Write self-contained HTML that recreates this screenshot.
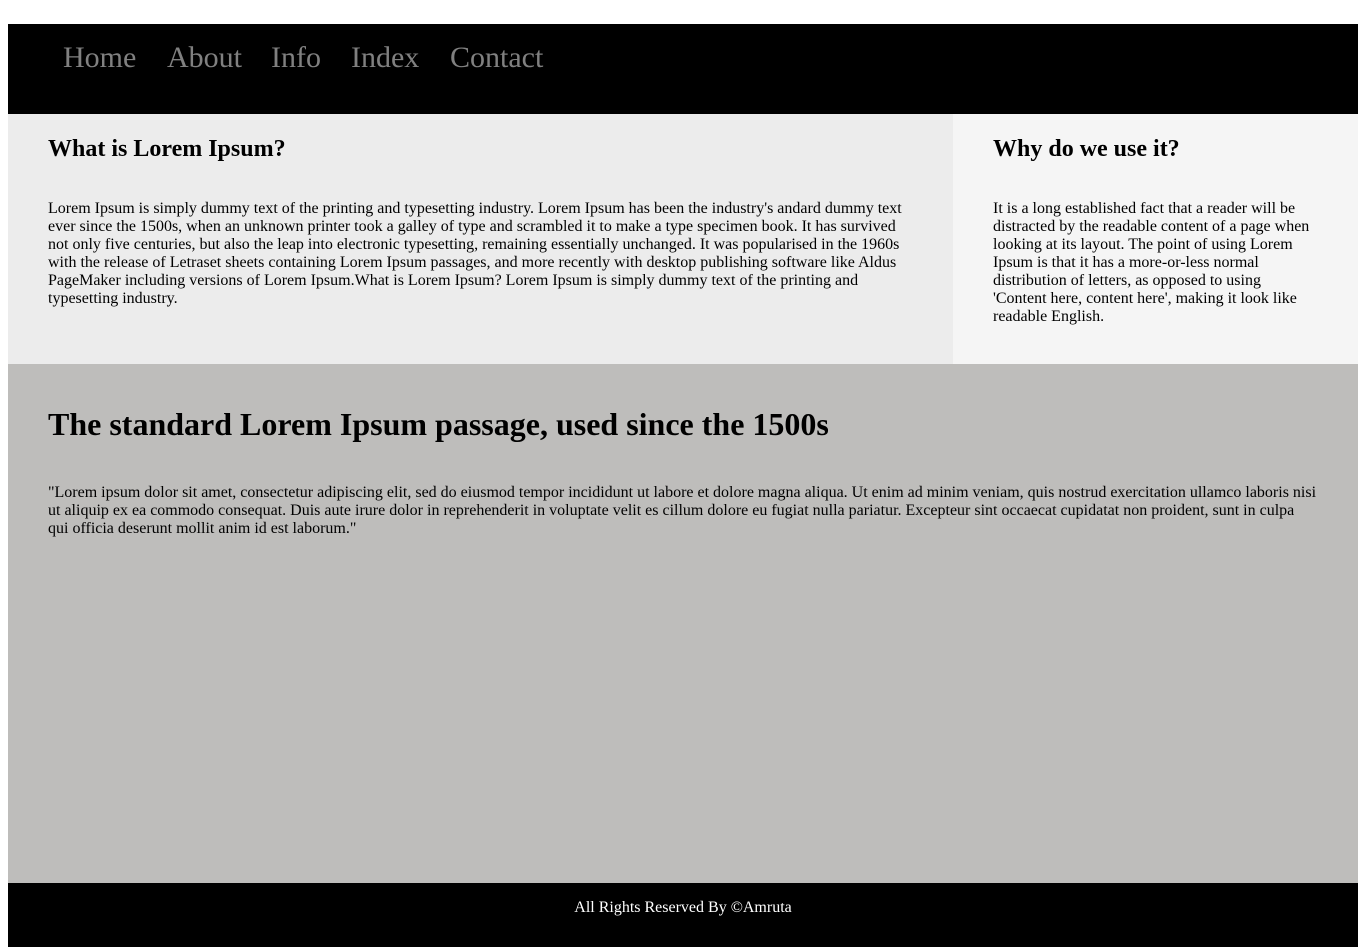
<!DOCTYPE html>
<html><head><style>
body{margin:0;background:#fff;font-family:"Liberation Serif",serif;}
.wrap{position:absolute;left:8px;top:24px;width:1350px;}
.hdr{background:#000;height:90px;position:relative;}
.hdr a{position:absolute;top:17px;font-size:30px;color:#808080;text-decoration:none;}
.row{display:flex;height:250px;}
.l{width:865px;background:#ececec;padding:0 40px;}
.r{width:325px;background:#f5f5f5;padding:0 40px;flex:1;}
h2{font-size:24px;margin:21px 0 0;line-height:28px;}
p{font-size:16px;line-height:18px;margin:0;}
.row p{margin-top:37px;}
.g{background:#bebdbb;height:519px;padding:0 40px;}
h1{font-size:32px;margin:0;padding-top:42px;line-height:37px;}
.g p{margin-top:41px;}
.f{background:#000;height:64px;color:#fff;text-align:center;font-size:16px;line-height:18px;padding-top:16px;box-sizing:border-box;}
</style></head><body><div class="wrap">
<div class="hdr"><a style="left:55px">Home</a><a style="left:159px">About</a><a style="left:263px">Info</a><a style="left:343px">Index</a><a style="left:442px">Contact</a></div>
<div class="row"><div class="l"><h2>What is Lorem Ipsum?</h2><p>Lorem Ipsum is simply dummy text of the printing and typesetting industry. Lorem Ipsum has been the industry's andard dummy text ever since the 1500s, when an unknown printer took a galley of type and scrambled it to make a type specimen book. It has survived not only five centuries, but also the leap into electronic typesetting, remaining essentially unchanged. It was popularised in the 1960s with the release of Letraset sheets containing Lorem Ipsum passages, and more recently with desktop publishing software like Aldus PageMaker including versions of Lorem Ipsum.What is Lorem Ipsum? Lorem Ipsum is simply dummy text of the printing and typesetting industry.</p></div>
<div class="r"><h2>Why do we use it?</h2><p>It is a long established fact that a reader will be distracted by the readable content of a page when looking at its layout. The point of using Lorem Ipsum is that it has a more-or-less normal distribution of letters, as opposed to using 'Content here, content here', making it look like readable English.</p></div></div>
<div class="g"><h1>The standard Lorem Ipsum passage, used since the 1500s</h1><p>"Lorem ipsum dolor sit amet, consectetur adipiscing elit, sed do eiusmod tempor incididunt ut labore et dolore magna aliqua. Ut enim ad minim veniam, quis nostrud exercitation ullamco laboris nisi ut aliquip ex ea commodo consequat. Duis aute irure dolor in reprehenderit in voluptate velit es cillum dolore eu fugiat nulla pariatur. Excepteur sint occaecat cupidatat non proident, sunt in culpa qui officia deserunt mollit anim id est laborum."</p></div>
<div class="f">All Rights Reserved By ©Amruta</div>
</div></body></html>
